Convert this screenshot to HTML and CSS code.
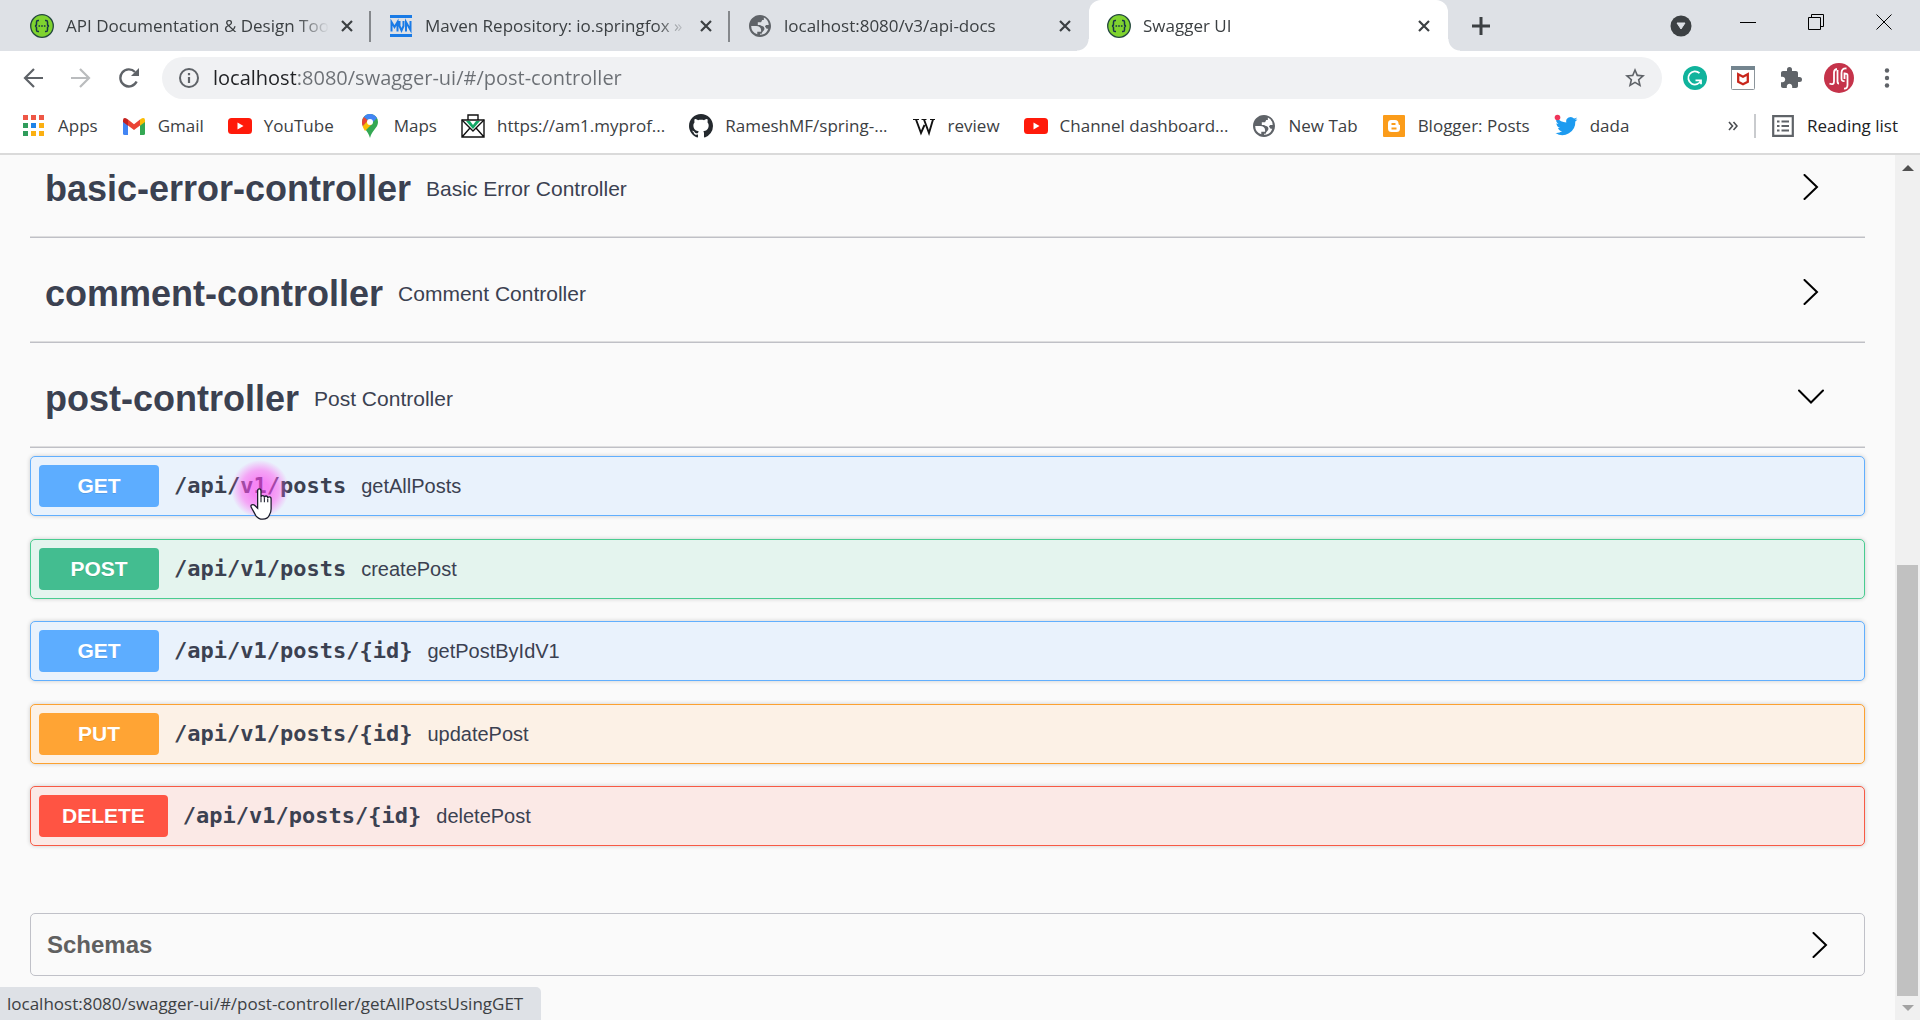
FILE: index.html
```html
<!DOCTYPE html>
<html lang="en">
<head>
<meta charset="utf-8">
<title>Swagger UI</title>
<link rel="stylesheet" href="styles.css">
</head>
<body>
<svg class="sprite" aria-hidden="true">
  <symbol id="swagger" viewBox="0 0 24 24"><circle cx="12" cy="12" r="11.300" fill="#7fd32f" stroke="#24483f" stroke-width="1.300"/><path d="M9 6.500H8c-1 0-1.500.6-1.500 1.600v2c0 1.200-.6 1.900-1.600 1.900 1 0 1.600.7 1.600 1.900v2c0 1 .5 1.600 1.500 1.600h1M15 6.500h1c1 0 1.500.6 1.500 1.600v2c0 1.200.6 1.900 1.600 1.900-1 0-1.600.7-1.600 1.900v2c0 1-.5 1.600-1.500 1.600h-1" fill="none" stroke="#173647" stroke-width="1.500"/><path d="M8.500 12h7" stroke="#173647" stroke-width="1.600" stroke-dasharray="1.600 1.100"/></symbol>
  <symbol id="globe" viewBox="2 2 20 20"><path fill="#5f6368" d="M12 2C6.480 2 2 6.480 2 12s4.480 10 10 10 10-4.480 10-10S17.520 2 12 2zM4 12h4.400c3.410.02 4.930 1.730 4.550 5.130H9.520v2.470A8.020 8.020 0 0 1 4 12zm8 8v-1h1.500c.5-1 .5-1.500 1.500-2.500s1.500-2 .5-3.500-2.500-1-3.500-2h-2V8.500h3l1-2h1.500V4.300A8 8 0 0 1 19.900 11h-2.400l-1 1.500 1.500 2h1.500A8 8 0 0 1 12 20z"/></symbol>
  <symbol id="close" viewBox="0 0 12 12"><path d="M1 1l10 10M11 1L1 11" stroke="#3c4043" stroke-width="2.200"/></symbol>
  <symbol id="youtube" viewBox="0 0 24 16"><rect width="24" height="16" rx="3.500" fill="#ff1a0a"/><path d="M9.500 4.500v7l6-3.500z" fill="#fff"/></symbol>
  <symbol id="chevron" viewBox="0 0 26 26"><path d="M6.500 1l12.500 12L6.500 25" fill="none" stroke="#000" stroke-width="2" stroke-linecap="round"/></symbol>
  <symbol id="chevron-down" viewBox="0 0 26 26"><path d="M1 6.500L13 18.500 25 6.500" fill="none" stroke="#000" stroke-width="2" stroke-linecap="round"/></symbol>
</svg>

<header class="browser">
  <nav class="tabstrip" aria-label="Tabs">
    <div class="tab"><svg class="favicon"><use href="#swagger"/></svg><a class="tab-title" href="#">API Documentation &amp; Design Tools</a><button class="tab-close" aria-label="Close tab"><svg><use href="#close"/></svg></button></div>
    <div class="tab"><svg class="favicon" viewBox="0 0 24 24"><path d="M1 2.500h22M1 21.500h22" stroke="#1a7be6" stroke-width="3"/><path d="M2.500 17.500V8l3 5 3-5v9.500M10.500 7v5l2 4.500 2-4.500V7M17 17.500V8l4.500 8V7" fill="none" stroke="#1a7be6" stroke-width="2"/></svg><a class="tab-title" href="#">Maven Repository: io.springfox » spri</a><button class="tab-close" aria-label="Close tab"><svg><use href="#close"/></svg></button></div>
    <div class="tab"><svg class="favicon globe"><use href="#globe"/></svg><a class="tab-title" href="#">localhost:8080/v3/api-docs</a><button class="tab-close" aria-label="Close tab"><svg><use href="#close"/></svg></button></div>
    <div class="tab active"><svg class="favicon"><use href="#swagger"/></svg><a class="tab-title" href="#">Swagger UI</a><button class="tab-close" aria-label="Close tab"><svg><use href="#close"/></svg></button></div>
    <button class="new-tab" aria-label="New tab"><svg viewBox="0 0 18 18"><path d="M9 0v18M0 9h18" stroke="#3c4043" stroke-width="3"/></svg></button>
    <button class="tab-search" aria-label="Search tabs"><svg viewBox="0 0 22 22"><circle cx="11" cy="11" r="10.500" fill="#3c4043"/><path d="M7 8h8l-4 6z" fill="#dee1e6" stroke="#dee1e6"/></svg></button>
    <div class="window-buttons">
      <button aria-label="Minimize"><svg viewBox="0 0 16 16"><path d="M0 8.500h16" stroke="#000"/></svg></button>
      <button aria-label="Restore"><svg viewBox="0 0 16 16" fill="none" stroke="#000"><path d="M.5 3.500h12v12H.5zM3.500 3.500v-3h12v12h-3"/></svg></button>
      <button aria-label="Close"><svg viewBox="0 0 16 16"><path d="M.5.5l15 15M15.500.5l-15 15" stroke="#000"/></svg></button>
    </div>
  </nav>

  <div class="toolbar">
    <div class="nav-buttons">
      <button aria-label="Back"><svg viewBox="0 0 20 20" fill="none" stroke="#5f6368" stroke-width="2.200"><path d="M20 10H2M11 1l-9 9 9 9"/></svg></button>
      <button aria-label="Forward" disabled><svg viewBox="0 0 20 20" fill="none" stroke="#babcbe" stroke-width="2.200"><path d="M0 10h18M9 1l9 9-9 9"/></svg></button>
      <button aria-label="Reload"><svg viewBox="0 0 20 20"><path d="M17.600 13.500A8.500 8.500 0 1 1 16 4" fill="none" stroke="#5f6368" stroke-width="2.400"/><path d="M20 0v8h-8z" fill="#5f6368"/></svg></button>
    </div>
    <div class="omnibox">
      <svg class="info" viewBox="0 0 20 20"><circle cx="10" cy="10" r="9" fill="none" stroke="#5f6368" stroke-width="2"/><path d="M10 9v6M10 5v2.200" stroke="#5f6368" stroke-width="2.200"/></svg>
      <input class="url" type="text" aria-label="Address" value="localhost:8080/swagger-ui/#/post-controller">
      <button aria-label="Bookmark this page"><svg viewBox="2 2 20 20"><path fill="#5f6368" d="M22 9.240l-7.190-.62L12 2 9.190 8.630 2 9.240l5.460 4.730L5.820 21 12 17.270 18.180 21l-1.630-7.030L22 9.240zM12 15.400l-3.760 2.270 1-4.280-3.320-2.880 4.380-.38L12 6.100l1.710 4.040 4.380.38-3.320 2.880 1 4.280L12 15.400z"/></svg></button>
    </div>
    <div class="extensions">
      <button aria-label="Grammarly"><svg viewBox="0 0 24 24"><circle cx="12" cy="12" r="12" fill="#10b39c"/><path d="M16.500 7.200A6.600 6.600 0 1 0 18 14.500M12.500 14.300H18v4" fill="none" stroke="#fff" stroke-width="1.800"/></svg></button>
      <button aria-label="McAfee"><svg viewBox="0 0 24 24"><rect x=".5" y=".5" width="23" height="23" rx="1" fill="#fff" stroke="#8c959b"/><path d="M0 0h24v4H0z" fill="#74858f"/><path d="M7.200 8.200l4.800 2.500 4.800-2.500v7.600L12 18.200l-4.800-2.400z" fill="none" stroke="#c8261c" stroke-width="2.300"/></svg></button>
      <button aria-label="Extensions"><svg viewBox="0 0 24 24"><path fill="#5f6368" d="M20.500 11H19V7c0-1.100-.9-2-2-2h-4V3.500a2.500 2.500 0 0 0-5 0V5H4c-1.100 0-1.990.9-1.990 2v3.800H3.500c1.490 0 2.700 1.210 2.700 2.700s-1.210 2.700-2.700 2.700H2V20c0 1.100.9 2 2 2h3.800v-1.500c0-1.490 1.210-2.700 2.700-2.700s2.700 1.210 2.700 2.700V22H17c1.100 0 2-.9 2-2v-4h1.500a2.500 2.500 0 0 0 0-5z"/></svg></button>
      <button class="avatar" aria-label="Profile"><svg viewBox="0 0 30 30"><circle cx="15" cy="15" r="15" fill="#c5334a"/><path d="M5.500 20.500c3 1.500 4.500.5 4.500-2V9.500Q10 6.500 13 6M13.500 7v11.500q0 2 1.500 2M22.500 5.500Q17.500 5 17.500 10v5.500q0 3 3 2.500M20.500 9.500V16M20.500 11q3.500-1 3 2v9q0 4-3.500 3.500" fill="none" stroke="#fff" stroke-width="1.800"/></svg></button>
      <button class="menu" aria-label="Menu"><svg viewBox="0 0 20 20" fill="#5f6368"><circle cx="10" cy="2.500" r="2.200"/><circle cx="10" cy="10" r="2.200"/><circle cx="10" cy="17.500" r="2.200"/></svg></button>
    </div>
  </div>

  <nav class="bookmarks" aria-label="Bookmarks">
    <a href="#"><svg viewBox="0 0 24 24"><path d="M1 1h5v5H1zM9 1h5v5H9zM17 1h5v5h-5z" fill="#ee5746"/><path d="M1 9h5v5H1zM1 17h5v5H1z" fill="#2f9c5b"/><path d="M9 9h5v5H9z" fill="#1e83e8"/><path d="M17 9h5v5h-5zM9 17h5v5H9zM17 17h5v5h-5z" fill="#fbb012"/></svg>Apps</a>
    <a href="#"><svg viewBox="0 0 24 24"><path d="M1 6l5 3.800V21H2.500Q1 21 1 19.500z" fill="#4285f4"/><path d="M23 6l-5 3.800V21h3.500q1.500 0 1.500-1.500z" fill="#34a853"/><path d="M6 5.500l6 4.700 6-4.700v6L12 16l-6-4.500z" fill="#ea4335"/><path d="M18 5.500l2-1.300q3-1 3 2V8l-5 3.800z" fill="#fbbc04"/><path d="M6 5.500L4 4.200Q1 3.200 1 6.200V8l5 3.800z" fill="#c5221f"/></svg>Gmail</a>
    <a href="#"><svg><use href="#youtube"/></svg>YouTube</a>
    <a href="#"><svg viewBox="0 0 24 24"><path d="M12 0a8 8 0 0 0-8 8c0 6 6 8 8 16 2-8 8-10 8-16a8 8 0 0 0-8-8z" fill="#34a853"/><path d="M4 8a8 8 0 0 1 2-5.200l4 3.600-5.200 6A9 9 0 0 1 4 8z" fill="#ea4335"/><path d="M5.800 2.900A8 8 0 0 1 19 4l-5 5z" fill="#4285f4"/><path d="M4.700 12.200L10 6.500l4 3.500-7 7q-2-3-2.300-4.800z" fill="#fbbc04"/><circle cx="12" cy="8" r="3" fill="#fff"/></svg>Maps</a>
    <a href="#"><svg viewBox="0 0 24 24" fill="none" stroke="#111" stroke-width="1.400"><path d="M5 7h14l-7 8z" fill="#12a765" stroke="none"/><path d="M9 7h6l-3 4z" fill="#fff" stroke="none"/><path d="M7 6V1h10v5"/><path d="M1 6h22v17H1zM1 23l8-9M23 23l-8-9"/><path d="M1 6l11 11L23 6"/></svg>https://am1.myprof...</a>
    <a href="#"><svg viewBox="0 0 16 16"><path fill="#24292e" d="M8 0C3.580 0 0 3.580 0 8c0 3.540 2.290 6.530 5.470 7.590.4.070.55-.17.55-.38 0-.19-.01-.82-.01-1.490-2.010.37-2.530-.49-2.690-.94-.09-.23-.48-.94-.82-1.130-.28-.15-.68-.52-.01-.53.63-.01 1.080.58 1.230.82.72 1.210 1.870.87 2.330.66.070-.52.28-.87.51-1.070-1.780-.2-3.640-.89-3.640-3.950 0-.87.31-1.590.82-2.150-.08-.2-.36-1.020.08-2.120 0 0 .67-.21 2.200.82.64-.18 1.320-.27 2-.27s1.360.09 2 .27c1.530-1.040 2.200-.82 2.200-.82.44 1.100.16 1.920.08 2.120.51.56.82 1.270.82 2.150 0 3.070-1.870 3.750-3.650 3.950.29.25.54.73.54 1.480 0 1.070-.01 1.930-.01 2.200 0 .21.15.46.55.38A8.010 8.010 0 0 0 16 8c0-4.420-3.580-8-8-8z"/></svg>RameshMF/spring-...</a>
    <a href="#"><svg viewBox="0 0 24 24"><path d="M1 5.500h6M9.500 5.500h5M18 5.500h5" stroke="#111" stroke-width="1.200"/><path d="M4 5.500L9 19l3.500-8M12 5.500L17 19l4-13.500" fill="none" stroke="#111" stroke-width="1.900"/></svg>review</a>
    <a href="#"><svg><use href="#youtube"/></svg>Channel dashboard...</a>
    <a href="#"><svg class="globe"><use href="#globe"/></svg>New Tab</a>
    <a href="#"><svg viewBox="0 0 24 24"><rect x="1" y="1" width="22" height="22" rx="1" fill="#fb9c1a"/><path d="M9 6h4q3.500 0 3.500 3.500 0 1.500 1.500 1.500v3.500Q18 18 14.500 18H9.500Q6 18 6 14.500v-5Q6 6 9 6z" fill="#fff"/><path d="M9.500 10h4M9.500 14.500h5" stroke="#fb9c1a" stroke-width="1.800"/></svg>Blogger: Posts</a>
    <a href="#"><svg viewBox="0 0 24 24"><path fill="#1d9bf0" d="M23.500 5.200a9 9 0 0 1-2.600.7 4.500 4.500 0 0 0 2-2.500c-.9.500-1.900.9-2.900 1.100a4.500 4.500 0 0 0-7.700 4.100A12.900 12.900 0 0 1 3 3.800a4.500 4.500 0 0 0 1.400 6.100 4.500 4.500 0 0 1-2-.6c0 2.300 1.500 4.100 3.600 4.600a4.600 4.600 0 0 1-2 .1 4.500 4.500 0 0 0 4.200 3.100A9.200 9.200 0 0 1 1.500 19a12.900 12.900 0 0 0 19.800-11.500c.9-.6 1.600-1.400 2.200-2.300z"/><circle cx="3.500" cy="3.500" r="2.800" fill="#f0355a"/></svg>dada</a>
    <button class="overflow" aria-label="More bookmarks"><svg viewBox="0 0 10 10"><path d="M1 1l3.500 4L1 9M5.500 1L9 5 5.500 9" fill="none" stroke="#4a4d51" stroke-width="1.600"/></svg></button>
    <a class="reading" href="#"><svg viewBox="0 0 24 24"><path d="M2.200 2.200h19.600v19.600H2.200z" fill="none" stroke="#5f6368" stroke-width="2.200"/><path d="M6 7.500h2.500M6 12h2.500M6 16.500h2.500M10.500 7.500H18M10.500 12H18M10.500 16.500H18" stroke="#5f6368" stroke-width="2"/></svg>Reading list</a>
  </nav>
</header>

<div class="viewport">
  <main class="page">
    <section class="tags">
      <div class="tag"><h3>basic-error-controller</h3><p>Basic Error Controller</p><button aria-label="Expand basic-error-controller"><svg><use href="#chevron"/></svg></button></div>
      <div class="tag"><h3>comment-controller</h3><p>Comment Controller</p><button aria-label="Expand comment-controller"><svg><use href="#chevron"/></svg></button></div>
      <div class="tag"><h3>post-controller</h3><p>Post Controller</p><button aria-label="Collapse post-controller"><svg><use href="#chevron-down"/></svg></button></div>
    </section>
    <section class="operations">
      <div class="op get"><button class="method">GET</button><a class="path" href="#">/api/v1/posts</a><span class="summary">getAllPosts</span>
        <div class="pointer" aria-hidden="true"><svg viewBox="0 0 26 38"><path d="M9 19V3.500Q9 1 11 1t2 2.500V11q0-2 2-2t2 2.500q0-2 2-2t2 2.500q0-1.500 2-1.500t2 2.500V25q0 4-2 7-2 5-8 5-5 0-8-4l-5-9q-2-3 0-4 2-1 4 1l3 3z" fill="#fff" stroke="#1b1b2b" stroke-width="1.500"/><path d="M13 11v6M17 12v5M21 12.500V17" stroke="#1b1b2b" stroke-width="1.300"/></svg></div>
      </div>
      <div class="op post"><button class="method">POST</button><a class="path" href="#">/api/v1/posts</a><span class="summary">createPost</span></div>
      <div class="op get"><button class="method">GET</button><a class="path" href="#">/api/v1/posts/{id}</a><span class="summary">getPostByIdV1</span></div>
      <div class="op put"><button class="method">PUT</button><a class="path" href="#">/api/v1/posts/{id}</a><span class="summary">updatePost</span></div>
      <div class="op delete"><button class="method">DELETE</button><a class="path" href="#">/api/v1/posts/{id}</a><span class="summary">deletePost</span></div>
    </section>
    <section class="schemas"><h4>Schemas</h4><button aria-label="Expand schemas"><svg><use href="#chevron"/></svg></button></section>
  </main>
  <div class="scrollbar" aria-hidden="true">
    <svg viewBox="0 0 12 6"><path d="M0 6l6-6 6 6z" fill="#505050"/></svg>
    <div class="thumb"></div>
    <svg viewBox="0 0 12 6"><path d="M0 0l6 6 6-6z" fill="#a3a3a3"/></svg>
  </div>
  <div class="status">localhost:8080/swagger-ui/#/post-controller/getAllPostsUsingGET</div>
</div>
</body>
</html>
```
FILE: styles.css
```css
* { box-sizing: border-box; }
body { margin: 0; height: 100vh; display: flex; flex-direction: column; overflow: hidden; background: #fafafa; font-family: "Open Sans", "Noto Sans", sans-serif; color: #3c4043; }
button { display: flex; align-items: center; justify-content: center; padding: 0; border: 0; background: none; font: inherit; color: inherit; flex-shrink: 0; }
a { color: inherit; text-decoration: none; }
h3, h4, p { margin: 0; }
svg { display: block; flex-shrink: 0; }
.sprite { position: absolute; width: 0; height: 0; }

/* Browser frame */
.browser { flex-shrink: 0; background: #fff; border-bottom: 2px solid #dadada; }
.tabstrip { display: flex; align-items: center; height: 51px; padding: 0 2px 0 12px; background: #dee1e6; }
.tab { position: relative; display: flex; align-items: center; gap: 12px; flex: 0 1 359px; min-width: 0; height: 51px; padding: 0 18px; }
.tab:nth-child(-n+2) { padding-right: 16px; border-right: 2px solid #85888c; border-image: linear-gradient(transparent 12px, #85888c 12px, #85888c 41px, transparent 41px) 1; }
.favicon { width: 24px; height: 24px; }
.globe.favicon, .bookmarks .globe { padding: 1px; }
.tab-title { flex: 1; min-width: 0; overflow: hidden; white-space: nowrap; font-size: 17px; line-height: 24px; -webkit-mask-image: linear-gradient(90deg, #000 calc(100% - 32px), transparent); mask-image: linear-gradient(90deg, #000 calc(100% - 32px), transparent); }
.tab-close svg { width: 12px; height: 12px; }
.tab.active { background: #fff; border-radius: 12px 12px 0 0; }
.tab.active::before, .tab.active::after { content: ""; position: absolute; bottom: 0; width: 12px; height: 12px; }
.tab.active::before { left: -12px; background: radial-gradient(circle at 0 0, transparent 11px, #fff 12px); }
.tab.active::after { right: -12px; background: radial-gradient(circle at 100% 0, transparent 11px, #fff 12px); }
.new-tab { width: 66px; height: 51px; }
.new-tab svg { width: 18px; height: 18px; }
.tab-search { margin-left: auto; width: 34px; }
.tab-search svg { width: 22px; height: 22px; }
.window-buttons { display: flex; align-self: flex-start; margin-left: 16px; }
.window-buttons button { width: 68px; height: 43px; }
.window-buttons svg { width: 16px; height: 16px; }

.toolbar { display: flex; align-items: center; height: 54px; padding: 0 21px 0 23px; }
.nav-buttons { display: flex; gap: 28px; width: 139px; }
.nav-buttons svg, .omnibox svg { width: 20px; height: 20px; }
.omnibox { display: flex; align-items: center; flex: 1; height: 42px; padding: 0 17px; background: #f0f1f3; border-radius: 21px; }
.url { flex: 1; min-width: 0; margin: 0 0 0 14px; padding: 0; border: 0; outline: 0; font: 20px/30px "Open Sans", "Noto Sans", sans-serif; color: transparent; background: linear-gradient(90deg, #202124 83px, #6b6f74 83px); -webkit-background-clip: text; background-clip: text; }
.extensions { display: flex; align-items: center; gap: 24px; padding-left: 21px; }
.extensions svg { width: 24px; height: 24px; }
.extensions .avatar svg { width: 30px; height: 30px; }
.extensions .avatar { margin: 0 -3px; }
.extensions .menu { width: 24px; }
.extensions .menu svg { width: 20px; height: 20px; }

.bookmarks { display: flex; align-items: center; gap: 24px; height: 48px; padding: 0 22px 6px; font-size: 17px; line-height: 24px; white-space: nowrap; }
.bookmarks a { display: flex; align-items: center; gap: 12px; }
.bookmarks svg { width: 24px; height: 24px; }
.bookmarks .overflow { margin-left: auto; margin-right: -8px; }
.bookmarks .overflow svg { width: 10px; height: 10px; }
.bookmarks .reading { border-left: 2px solid #c9cbce; padding-left: 15px; color: #202124; }

/* Page */
.viewport { position: relative; display: flex; flex: 1; min-height: 0; overflow: hidden; }
.page { flex: 1; min-width: 0; padding: 0 30px; color: #3b4151; font-family: "Liberation Sans", Arial, sans-serif; }
.tags { margin-top: -22px; }
.tag { display: flex; align-items: center; gap: 15px; height: 105px; padding: 8px 41px 0 15px; border-bottom: 1px solid #bfc0c6; box-shadow: inset 0 -1px #dededf; }
.tag h3 { font-size: 36px; line-height: 50px; }
.tag p { flex: 1; font-size: 21px; line-height: 32px; }
.tag button { padding-bottom: 4px; }
.tag svg, .schemas svg { width: 26px; height: 26px; }
.operations { display: flex; flex-direction: column; justify-content: space-between; min-height: 390px; margin-top: 8px; }
.op { position: relative; display: flex; align-items: center; gap: 15px; height: 60px; padding: 0 8px; border: 1px solid; border-radius: 5px; box-shadow: 0 0 4px rgba(0, 0, 0, .19); }
.method { min-width: 120px; height: 42px; padding: 0 23px; border-radius: 4px; color: #fff; font-size: 21px; font-weight: 700; line-height: 24px; text-shadow: 0 1px 0 rgba(0, 0, 0, .1); }
.path { font: 700 22px/30px "DejaVu Sans Mono", monospace; }
.summary { font-size: 20px; line-height: 24px; }
.get { border-color: #61affe; background: #e9f2fc; }
.get .method { background: #5dadff; }
.post { border-color: #49cc90; background: #e4f4ee; }
.post .method { background: #43bd90; }
.put { border-color: #fca130; background: #fcf1e6; }
.put .method { background: #ffa434; }
.delete { border-color: #f75a45; background: #fbe9e6; }
.delete .method { background: #ff5443; }
.pointer { position: absolute; left: 200px; top: 3px; width: 58px; height: 58px; border-radius: 50%; background: radial-gradient(closest-side, rgba(255, 60, 240, .6) 30%, rgba(255, 90, 240, .5) 65%, transparent); pointer-events: none; }
.pointer svg { position: absolute; left: 17px; top: 28px; width: 26px; height: 32px; }
.schemas { display: flex; align-items: center; justify-content: space-between; height: 63px; margin-top: 67px; padding: 0 31px 0 16px; border: 1px solid #c0c1c8; border-radius: 5px; }
.schemas h4 { font-size: 24px; line-height: 30px; color: #606060; }
.scrollbar { display: flex; flex-direction: column; align-items: center; width: 25px; padding: 10px 2px 9px; background: #f0f0f0; }
.scrollbar svg { width: 12px; height: 6px; }
.thumb { width: 21px; height: 51%; margin: auto 0 9px; background: #c1c1c1; }
.status { position: absolute; left: 0; bottom: 0; height: 33px; padding: 0 18px 0 7px; border-radius: 0 5px 0 0; background: #dee1e6; font-size: 17px; line-height: 33px; }
```
